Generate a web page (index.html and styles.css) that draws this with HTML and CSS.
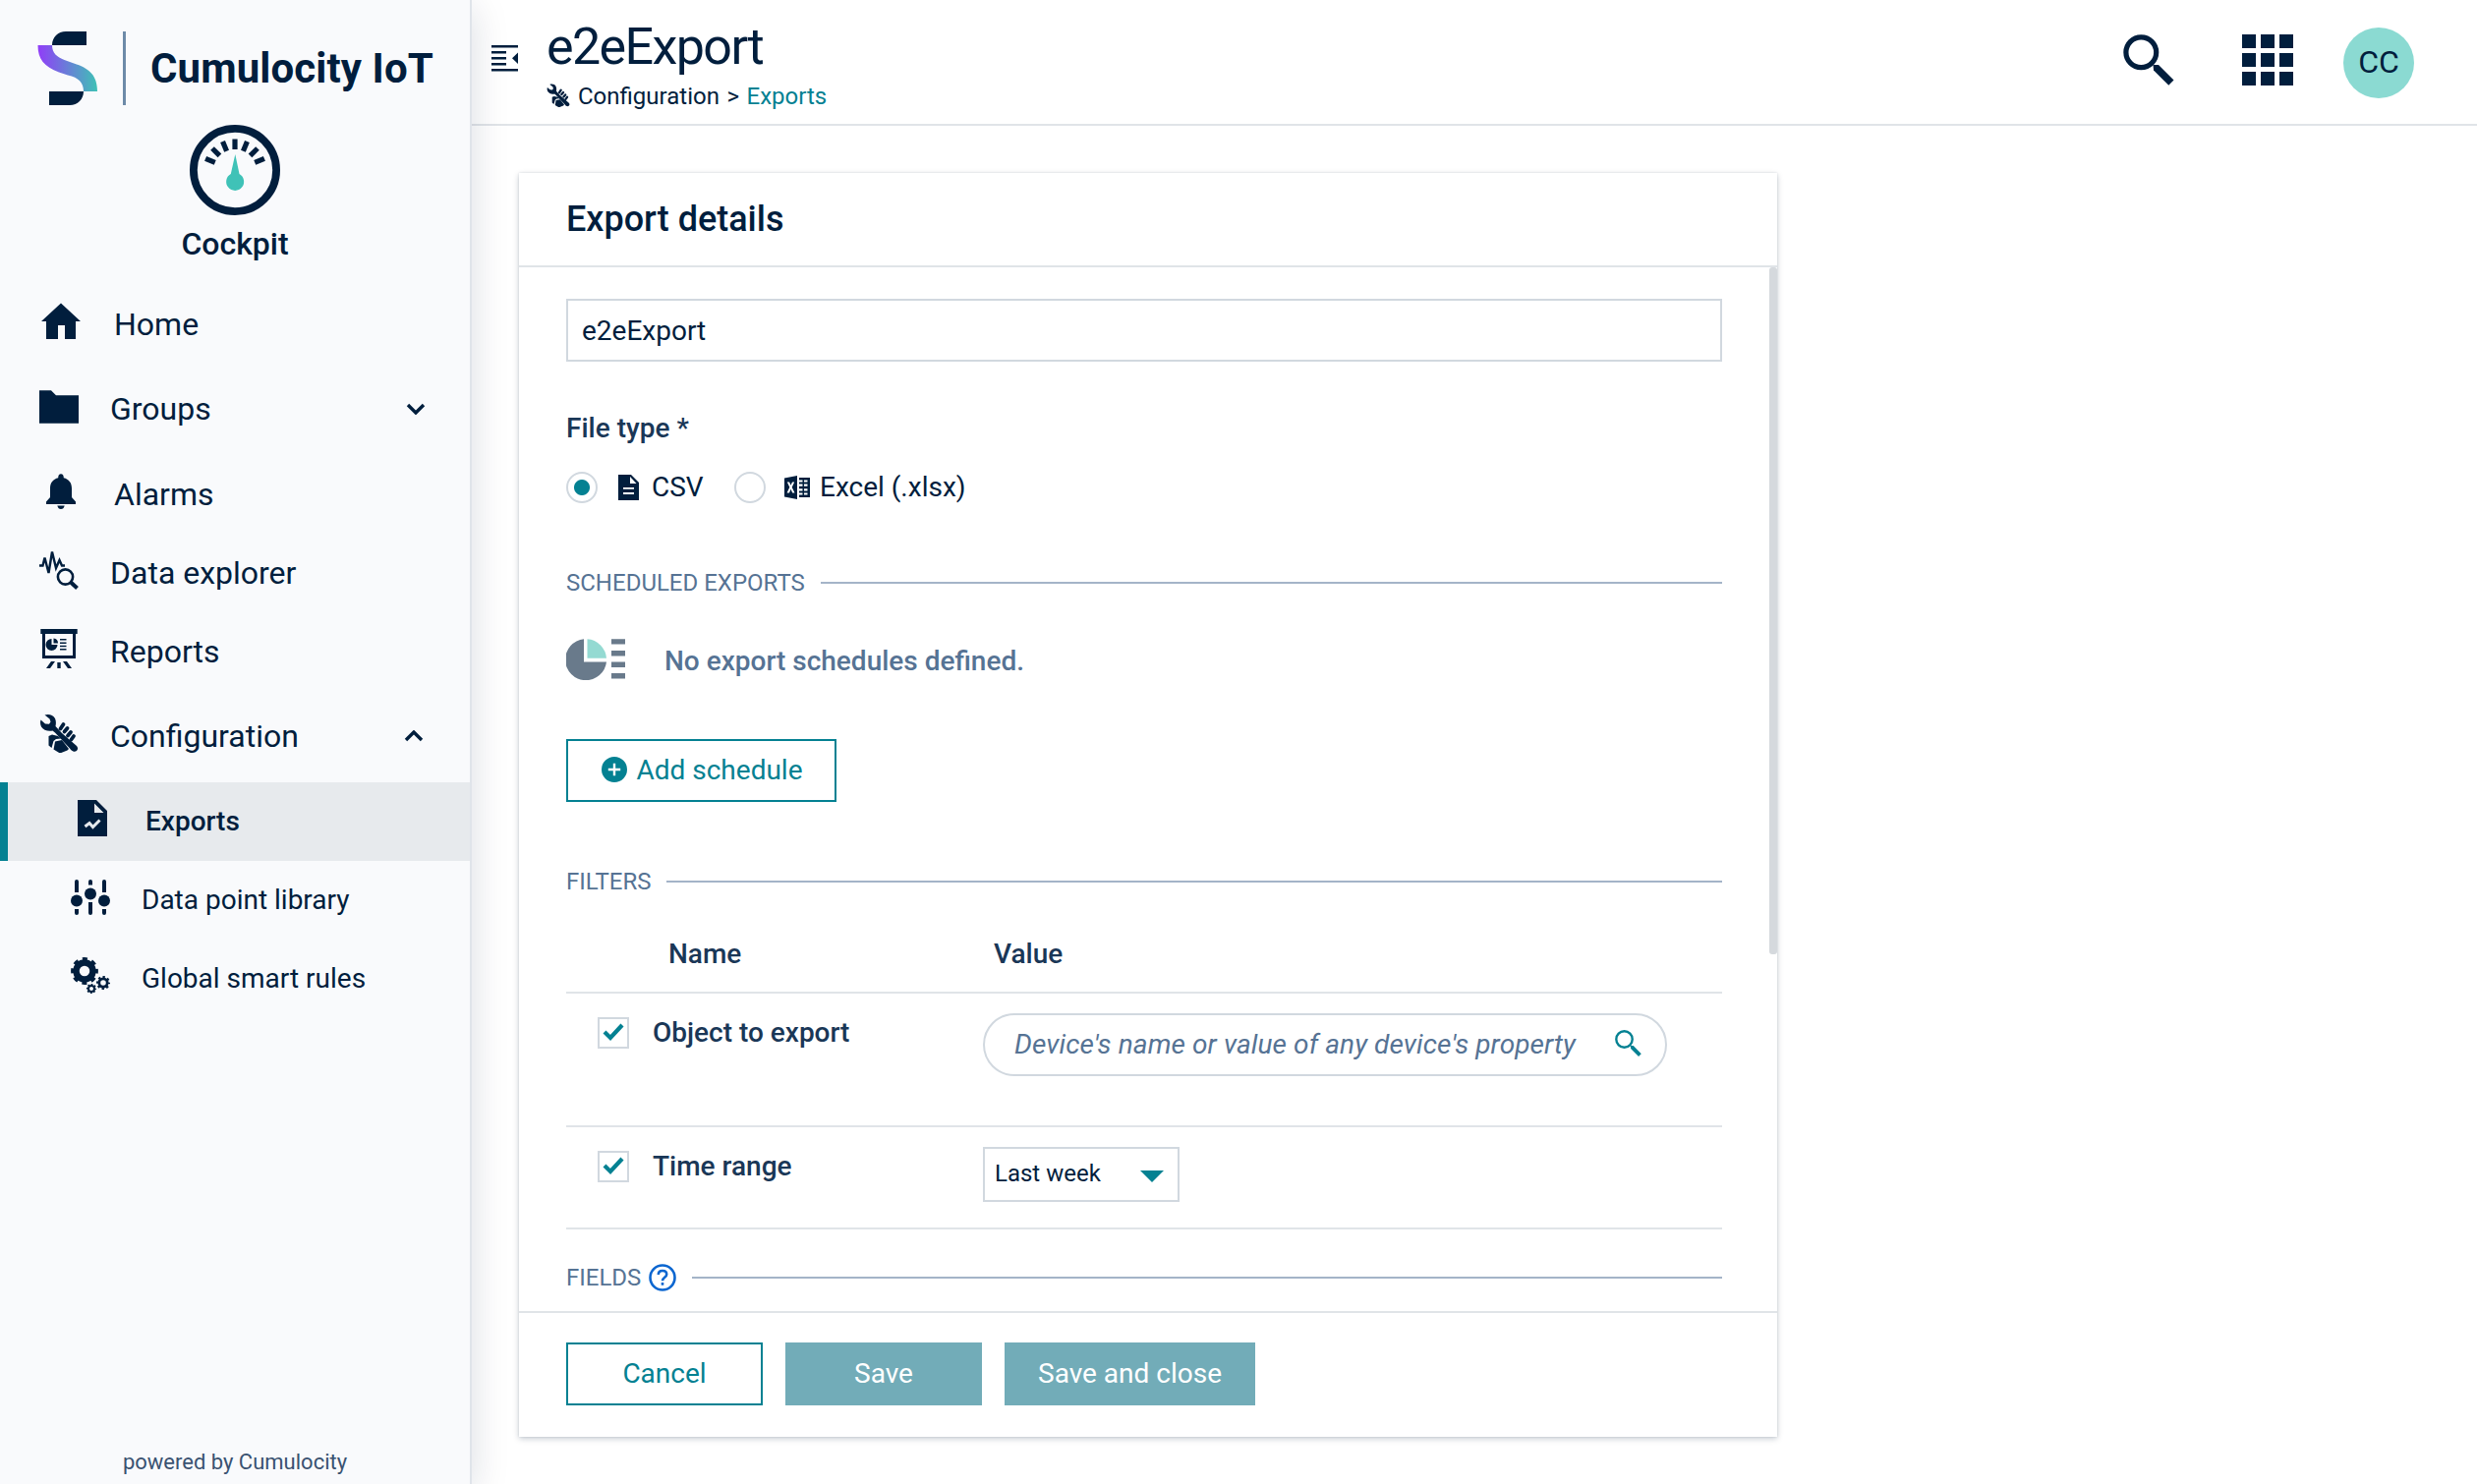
FILE: index.html
```html
<!DOCTYPE html>
<html lang="en">
<head>
<meta charset="utf-8">
<title>e2eExport - Cockpit</title>
<link rel="stylesheet" href="styles.css">
</head>
<body>
<svg class="sprite" aria-hidden="true">
  <symbol id="i-tools" viewBox="0 0 40 40">
    <path d="M5.500 1.500C9 .2 14 1 16 5C17.200 8 17 10.500 16.500 13L23 20L38 33C40.500 36 38 39.500 34.500 38.500C33 38 32 37 31 35.500L16 19.500L13.500 17.500C9 18.500 4 17 2 13.500C.8 11 .8 8.500 1.500 6.500L6 10.500L10 10.800L11.500 8.500L10.500 5.500Z"/>
    <path d="M24.500 11L21.500 15.500M28.500 15L25.500 18.500M32 19L29 22.500M35 23L32.500 26.500" fill="none" stroke="currentColor" stroke-width="3.800" stroke-linecap="round"/>
    <path d="M9.500 23L13 21.500L19 23L22 25.500L17 26L14.500 28L12.500 35L9.500 32.500Z"/>
    <path d="M16 28.500L23 27L30 36L28.500 37.500L21 40.500L14.500 36.500Z"/>
  </symbol>
</svg>

<div class="app">
  <aside class="sidebar">
    <div class="brand">
      <svg class="brand-mark" viewBox="0 0 62 75">
        <defs><linearGradient id="g" x1="0" x2="1" y1="0" y2="0"><stop offset="0" stop-color="#913df8"/><stop offset="1" stop-color="#3fc1b6"/></linearGradient></defs>
        <path fill="#011e3d" d="M15 14C15 6 21 0 29 0H50V14ZM47 61C47 69 41 75 33 75H12V61Z"/>
        <path fill="url(#g)" d="M.5 14H15C15 22 20 26 27.500 29L40 33.500C53 38 61 45 61 61H47C47 52 42 47 31 44.500L22 41.500C7 36 .5 28 .5 14Z"/>
      </svg>
      <span class="brand-name">Cumulocity IoT</span>
    </div>
    <div class="app-id">
      <svg class="gauge" viewBox="0 0 92 92">
        <circle cx="46" cy="46" r="42.100" fill="none" stroke="#011e3d" stroke-width="7.800"/>
        <g stroke="#011e3d" stroke-width="5.200">
          <path d="M46 14.500V25"/>
          <path d="M46 14.500V25" transform="rotate(22.500 46 47)"/><path d="M46 14.500V25" transform="rotate(-22.500 46 47)"/>
          <path d="M46 14.500V25" transform="rotate(45 46 47)"/><path d="M46 14.500V25" transform="rotate(-45 46 47)"/>
          <path d="M46 14.500V25" transform="rotate(67 46 47)"/><path d="M46 14.500V25" transform="rotate(-67 46 47)"/>
        </g>
        <path fill="#3fc2b7" d="M46.300 30L50.500 50A9 9 0 1 1 41.800 50Z"/>
      </svg>
      <span class="app-name">Cockpit</span>
    </div>
    <nav class="nav">
      <a class="item wide"><svg class="ico" viewBox="0 0 40 40"><path d="M20 1.500L40 20H35V38H24V24H17V38H5V20H0Z"/></svg><span>Home</span></a>
      <a class="item gap"><svg class="ico" viewBox="0 0 40 40"><path d="M0 4.300H12L17 9.300H40V37.700H0Z"/></svg><span>Groups</span>
        <svg class="chev" viewBox="0 0 20 12"><path d="M2 2L10 10L18 2"/></svg></a>
      <a class="item wide gap lower"><svg class="ico" viewBox="0 0 40 40"><path d="M20 2.300C21.800 2.300 22.800 3.500 22.800 6.200C28 7.500 31 11 31 17V26L35 30.500V33H5V30.500L9 26V17C9 11 12 7.500 17.200 6.200C17.200 3.500 18.200 2.300 20 2.300ZM16.300 34.500H23.700C23 37 22 38 20 38C18 38 17 37 16.300 34.500Z"/></svg><span>Alarms</span></a>
      <a class="item"><svg class="ico" viewBox="0 0 40 40"><g fill="none" stroke="currentColor"><path stroke-width="2.400" d="M0 15.500H3.500L5.500 7.500L9.500 23L13 1.500L17 18L20.500 10L23 15.500H26"/><circle cx="26.500" cy="27" r="7.600" stroke-width="2.600"/><path stroke-width="4" d="M31.500 32L38.500 38.500"/></g></svg><span>Data explorer</span></a>
      <a class="item"><svg class="ico" viewBox="0 0 40 40"><path d="M1.300 0H38.700V5H1.300Z"/><path fill-rule="evenodd" d="M3 4H37V30H3ZM6 5V27H34V5Z"/><path d="M12.500 10V16H18.500A6 6 0 1 1 12.500 10ZM14.500 9.500A5 5 0 0 1 19 14.500H14.500ZM21 10H27.500V11.500H21ZM21 13.500H27.500V15H21ZM21 16.800H27.500V18.300H21ZM21 20H27.500V21.500H21ZM12 33H16L11 40H7ZM18.300 34H21.700V40H18.300ZM24 33H28L33 40H29Z"/></svg><span>Reports</span></a>
      <a class="item gap"><svg class="ico"><use href="#i-tools"/></svg><span>Configuration</span>
        <svg class="chev up" viewBox="0 0 20 12"><path d="M2 10L10 2L18 10"/></svg></a>
      <a class="item child wide active"><svg class="ico" viewBox="0 0 40 40"><path fill-rule="evenodd" d="M5 1H24L35 12V38H5ZM22 4.500V14H31.500Z"/><path d="M12.500 28L17 24.500L20.500 28.500L27.500 21.500" fill="none" stroke="#e7eaed" stroke-width="3"/></svg><span>Exports</span></a>
      <a class="item child"><svg class="ico" viewBox="0 0 40 40"><g stroke="currentColor" stroke-width="4" stroke-linecap="round"><path d="M6 4V13M6 34V36M20 4V5M20 27V36M34 4V13M34 34V36"/></g><path d="M4 11h4v4H4zM4 32h4v3H4zM18 5h4v2.500h-4zM18 25h4v4h-4zM32 11h4v4h-4zM32 32h4v3h-4z"/><circle cx="6" cy="23.500" r="6"/><circle cx="20" cy="16.500" r="6"/><circle cx="34" cy="23.500" r="6"/></svg><span>Data point library</span></a>
      <a class="item child"><svg class="ico" viewBox="0 0 40 40"><g fill="none" stroke="currentColor"><circle cx="14" cy="15" r="8.500" stroke-width="6.500"/><circle cx="14" cy="15" r="12.200" stroke-width="3.400" stroke-dasharray="5 4.580" stroke-dashoffset="2.500"/><circle cx="33" cy="27" r="4.200" stroke-width="2.800"/><circle cx="33" cy="27" r="6" stroke-width="2" stroke-dasharray="2.400 2.310" stroke-dashoffset="1.200"/><circle cx="21" cy="33" r="3" stroke-width="2"/><circle cx="21" cy="33" r="4.400" stroke-width="1.400" stroke-dasharray="1.800 1.650" stroke-dashoffset=".9"/></g></svg><span>Global smart rules</span></a>
    </nav>
    <div class="powered">powered by Cumulocity</div>
  </aside>

  <div class="page">
    <header class="topbar">
      <svg class="toggle" viewBox="0 0 27 27"><path d="M0 0H27V2.500H0ZM0 6H15V8.500H0ZM0 12H15V14.500H0ZM0 18H15V20.500H0ZM0 24H27V26.500H0ZM27 7.500V19L21 13.300Z"/></svg>
      <div class="heading">
        <h1>e2eExport</h1>
        <div class="crumbs"><svg class="crumb-ico" viewBox="0 0 40 40"><use href="#i-tools" width="40" height="40"/></svg><span>Configuration</span><span class="sep">&gt;</span><a>Exports</a></div>
      </div>
      <svg class="search" viewBox="0 0 52 52"><circle cx="18.300" cy="18.300" r="15.400" fill="none" stroke="currentColor" stroke-width="5.200"/><path d="M30.500 31H36L51.500 46.500L46.300 51.800L31 36.500Z"/></svg>
      <svg class="apps" viewBox="0 0 52 52"><path d="M0 0h14v14H0zM19 0h14v14H19zM38 0h14v14H38zM0 19h14v14H0zM19 19h14v14H19zM38 19h14v14H38zM0 38h14v14H0zM19 38h14v14H19zM38 38h14v14H38z"/></svg>
      <div class="avatar">CC</div>
    </header>

    <main class="card">
      <h2>Export details</h2>
      <div class="body">
        <div class="content">
          <div class="input">e2eExport</div>
          <div class="label">File type *</div>
          <div class="radios">
            <i class="radio on"></i>
            <svg class="csv" viewBox="0 0 21 26"><path fill-rule="evenodd" d="M0 0H13L21 8V26H0ZM12 2V9H18.500ZM5 13V14.800H16V13ZM5 18V20H16V18Z"/></svg>
            <span class="csv-t">CSV</span>
            <i class="radio"></i>
            <svg class="xls" viewBox="0 0 26 24"><path fill-rule="evenodd" d="M0 2.500L13 0V24L0 21.500ZM2.800 6.500L5.300 11.800L2.600 17.500H5L6.500 13.800L8.200 17.500H10.500L7.700 11.800L10.200 6.500H8L6.500 9.800L5.100 6.500ZM15 2H26V22H15V19.500H18.500V17.500H15V15.500H18.500V13.300H15V10.800H18.500V8.500H15V6.500H18.500V4.500H15ZM20 4.500V6.500H23.500V4.500ZM20 8.500V10.800H23.500V8.500ZM20 13.300V15.500H23.500V13.300ZM20 17.500V19.500H23.500V17.500Z"/></svg>
            <span>Excel (.xlsx)</span>
          </div>
          <div class="legend sched">SCHEDULED EXPORTS</div>
          <div class="empty">
            <svg viewBox="0 0 60 42"><path fill="#697a8b" d="M18 .3V23.500H41A21 21 0 1 1 18 .3ZM46 .3H60V5.500H46ZM46 12H60V17.500H46ZM46 23.500H60V29H46ZM46 35H60V40.500H46Z"/><path fill="#94dad2" d="M21.500 .3A21 21 0 0 1 41 19.800H21.500Z"/></svg>
            <span>No export schedules defined.</span>
          </div>
          <button class="btn add"><svg viewBox="0 0 26 26"><path fill-rule="evenodd" d="M13 0A13 13 0 1 1 13 26A13 13 0 1 1 13 0ZM11.800 6.800V11.800H6.800V14.200H11.800V19.200H14.200V14.200H19.200V11.800H14.200V6.800Z"/></svg>Add schedule</button>
          <div class="legend filters">FILTERS</div>
          <div class="table">
            <div class="tr head"><span class="th-name">Name</span><span>Value</span></div>
            <div class="tr obj">
              <i class="check"><svg viewBox="0 0 28 28"><path d="M5 14L11 20L23 7"/></svg></i><b>Object to export</b>
              <div class="pill"><em>Device's name or value of any device's property</em>
                <svg viewBox="0 0 52 52"><circle cx="18.300" cy="18.300" r="15.800" fill="none" stroke="currentColor" stroke-width="4.600"/><path d="M30.500 31H36L51.500 46.500L46.300 51.800L31 36.500Z"/></svg></div>
            </div>
            <div class="tr time">
              <i class="check"><svg viewBox="0 0 28 28"><path d="M5 14L11 20L23 7"/></svg></i><b>Time range</b>
              <div class="select"><span>Last week</span><i></i></div>
            </div>
          </div>
          <div class="legend fields">FIELDS<svg viewBox="0 0 28 28"><circle cx="14" cy="14" r="12.500"/><path d="M9.800 11C9.800 8.500 11.500 7 14 7C16.500 7 18.200 8.500 18.200 10.700C18.200 13.800 14 13.800 14 17.300M14 19V21.800"/></svg></div>
        </div>
        <div class="scroll"></div>
      </div>
      <footer>
        <button class="btn cancel">Cancel</button>
        <button class="btn solid">Save</button>
        <button class="btn solid close">Save and close</button>
      </footer>
    </main>
  </div>
</div>
</body>
</html>
```
FILE: styles.css
```css
* { box-sizing: border-box; }
body {
  margin: 0;
  font-family: Roboto, "Liberation Sans", sans-serif;
  font-size: 28px;
  color: #011e3d;
  background: #fff;
}
svg { display: block; flex: none; fill: currentColor; }
i, em, b { display: block; }
.sprite { position: absolute; width: 0; height: 0; }
.app { display: flex; width: 2520px; height: 1510px; overflow: hidden; }

/* Sidebar */
.sidebar {
  display: flex;
  flex-direction: column;
  flex: none;
  width: 480px;
  background: #f9fafc;
  border-right: 2px solid #e0e4ea;
  box-shadow: 0 8px 36px rgba(1, 30, 61, .15);
  z-index: 1;
}
.brand { display: flex; height: 75px; margin: 32px 0 0 38px; }
.brand-mark { width: 62px; height: 75px; }
.brand-name {
  margin-left: 25px;
  padding-left: 25px;
  border-left: 3px solid #6d8aa8;
  font-size: 42px;
  font-weight: 700;
  line-height: 75px;
  letter-spacing: .1px;
  white-space: nowrap;
}
.app-id { display: flex; flex-direction: column; align-items: center; height: 183px; padding-top: 20px; }
.gauge { width: 92px; height: 92px; }
.app-name { margin-top: 9px; font-size: 32px; font-weight: 500; line-height: 40px; }
.nav { display: flex; flex-direction: column; }
.item {
  display: flex;
  align-items: center;
  height: 80px;
  padding-left: 40px;
  font-size: 32px;
}
.item span { flex: 1; margin-left: 32px; }
.item.gap { margin-top: 6px; }
.item.gap.lower { margin-top: 7px; }
.item.wide { padding-left: 42px; }
.item.wide span { margin-left: 34px; }
.ico { width: 40px; height: 40px; margin-bottom: 6px; }
.chev { width: 20px; height: 12px; margin-right: 45px; fill: none; stroke: currentColor; stroke-width: 3.400; }
.chev.up { margin-right: 47px; }
.item.child { padding-left: 72px; font-size: 28px; }
.item.child span { margin-left: 32px; padding-bottom: 2px; }
.item.active {
  margin-top: 7px;
  padding-left: 66px;
  font-weight: 500;
  background: #e7eaed;
  border-left: 8px solid #048192;
}
.item.child.active span { margin-left: 34px; }
.powered { margin-top: auto; padding-bottom: 8px; text-align: center; font-size: 22px; line-height: 28px; color: #3a5271; }

/* Top bar */
.page { flex: 1; min-width: 0; }
.topbar { display: flex; height: 128px; padding-left: 20px; border-bottom: 2px solid #e0e4e8; }
.toggle { width: 27px; height: 27px; margin-top: 46px; }
.heading { flex: 1; margin-left: 29px; }
h1 { margin: 17px 0 0; font-size: 52px; font-weight: 400; line-height: 62px; letter-spacing: -1.600px; }
.crumbs { display: flex; align-items: center; height: 38px; font-size: 24px; }
.crumb-ico { width: 24px; height: 24px; margin: 0 8px 2px 0; }
.sep { margin: 0 7.500px; }
.crumbs a { color: #048192; }
.search { width: 52px; height: 52px; margin-top: 35px; }
.apps { width: 52px; height: 52px; margin: 35px 51px 0 69px; }
.avatar {
  width: 72px;
  height: 72px;
  margin: 28px 64px 0 0;
  border-radius: 50%;
  background: #8bdad2;
  font-size: 32px;
  line-height: 71px;
  text-align: center;
}

/* Card */
.card {
  width: 1280px;
  height: 1286px;
  margin: 48px 0 0 48px;
  background: #fff;
  box-shadow: 0 2px 6px rgba(1, 30, 61, .22), 0 0 2px rgba(1, 30, 61, .12);
}
h2 {
  height: 96px;
  margin: 0;
  padding-left: 48px;
  border-bottom: 2px solid #e0e4e8;
  font-size: 36px;
  font-weight: 500;
  line-height: 94px;
}
.body { display: flex; height: 1062px; }
.content { width: 1176px; margin-left: 48px; padding-top: 32px; }
.scroll { width: 8px; height: 699px; margin-left: 48px; border-radius: 3px; background: #d5d9dd; }
.input { height: 64px; padding-left: 14px; border: 2px solid #d1d8df; line-height: 62px; }
.label { margin-top: 49px; font-weight: 500; line-height: 38px; color: #1a3757; }
.radios { display: flex; align-items: center; height: 32px; margin-top: 25px; }
.radios span { padding-bottom: 2px; }
.radio { width: 32px; height: 32px; border: 2px solid #d1d8df; border-radius: 50%; }
.radio.on { background: radial-gradient(circle, #048192 7.500px, #fff 8.500px); }
.csv { width: 21px; height: 26px; margin: 0 13px 0 21px; }
.csv-t { width: 84px; }
.xls { width: 26px; height: 24px; margin: 0 10px 0 19px; }
.legend { display: flex; align-items: center; height: 30px; font-size: 24px; color: #567394; }
.legend::after { content: ""; flex: 1; height: 2px; margin-left: 16px; background: #a4b4c8; }
.sched { margin-top: 66px; }
.empty { display: flex; align-items: center; height: 42px; margin-top: 42px; font-weight: 500; color: #567394; }
.empty svg { width: 60px; height: 42px; margin-right: 40px; }
.empty span { padding-top: 2px; }
.btn {
  display: flex;
  align-items: center;
  justify-content: center;
  width: 200px;
  height: 64px;
  padding: 0 0 2px;
  border: 2px solid #048192;
  background: #fff;
  font: inherit;
  color: #048192;
}
.add { width: 275px; margin-top: 60px; padding-left: 2px; }
.add svg { width: 26px; height: 26px; margin: 0 9px 1px 0; }
.filters { margin-top: 66px; }
.filters::after { margin-left: 15px; }
.tr { display: flex; align-items: flex-start; border-bottom: 2px solid #e0e4e8; color: #1a3757; font-weight: 500; }
.tr b { width: 336px; margin: 4px 0 0 24px; font-weight: 500; line-height: 32px; }
.head { height: 99px; line-height: 118px; }
.th-name { width: 331px; margin-left: 104px; }
.obj { height: 136px; padding-top: 20px; }
.time { height: 104px; padding-top: 20px; }
.tr .check { margin: 4px 0 0 32px; }
.check { width: 32px; height: 32px; border: 2px solid #d1d8df; }
.check svg { width: 28px; height: 28px; margin-top: -1px; fill: none; stroke: #048192; stroke-width: 4.200; }
.pill {
  display: flex;
  align-items: center;
  justify-content: space-between;
  width: 696px;
  height: 64px;
  padding: 0 24px 0 30px;
  border: 2px solid #d1d8df;
  border-radius: 32px;
  font-weight: 400;
  letter-spacing: .1px;
  white-space: nowrap;
  color: #567394;
}
.pill em { padding-bottom: 2px; }
.pill svg { width: 27px; height: 27px; margin-bottom: 3px; color: #048192; }
.select {
  display: flex;
  align-items: center;
  justify-content: space-between;
  width: 200px;
  height: 56px;
  padding: 0 14px 2px 10px;
  border: 2px solid #d1d8df;
  font-size: 24px;
  font-weight: 400;
  color: #011e3d;
}
.select i { margin-top: 5px; border: 12px solid transparent; border-top-color: #048192; border-bottom: 0; }
.fields { margin-top: 34px; }
.fields svg { width: 28px; height: 28px; margin-left: 8px; fill: none; stroke: #0b66d0; stroke-width: 2.600; }
footer { display: flex; gap: 23px; height: 128px; padding: 30px 0 0 48px; border-top: 2px solid #e0e4e8; }
.solid { border: 0; background: #72acb8; color: #fff; }
.close { width: 255px; }
```
